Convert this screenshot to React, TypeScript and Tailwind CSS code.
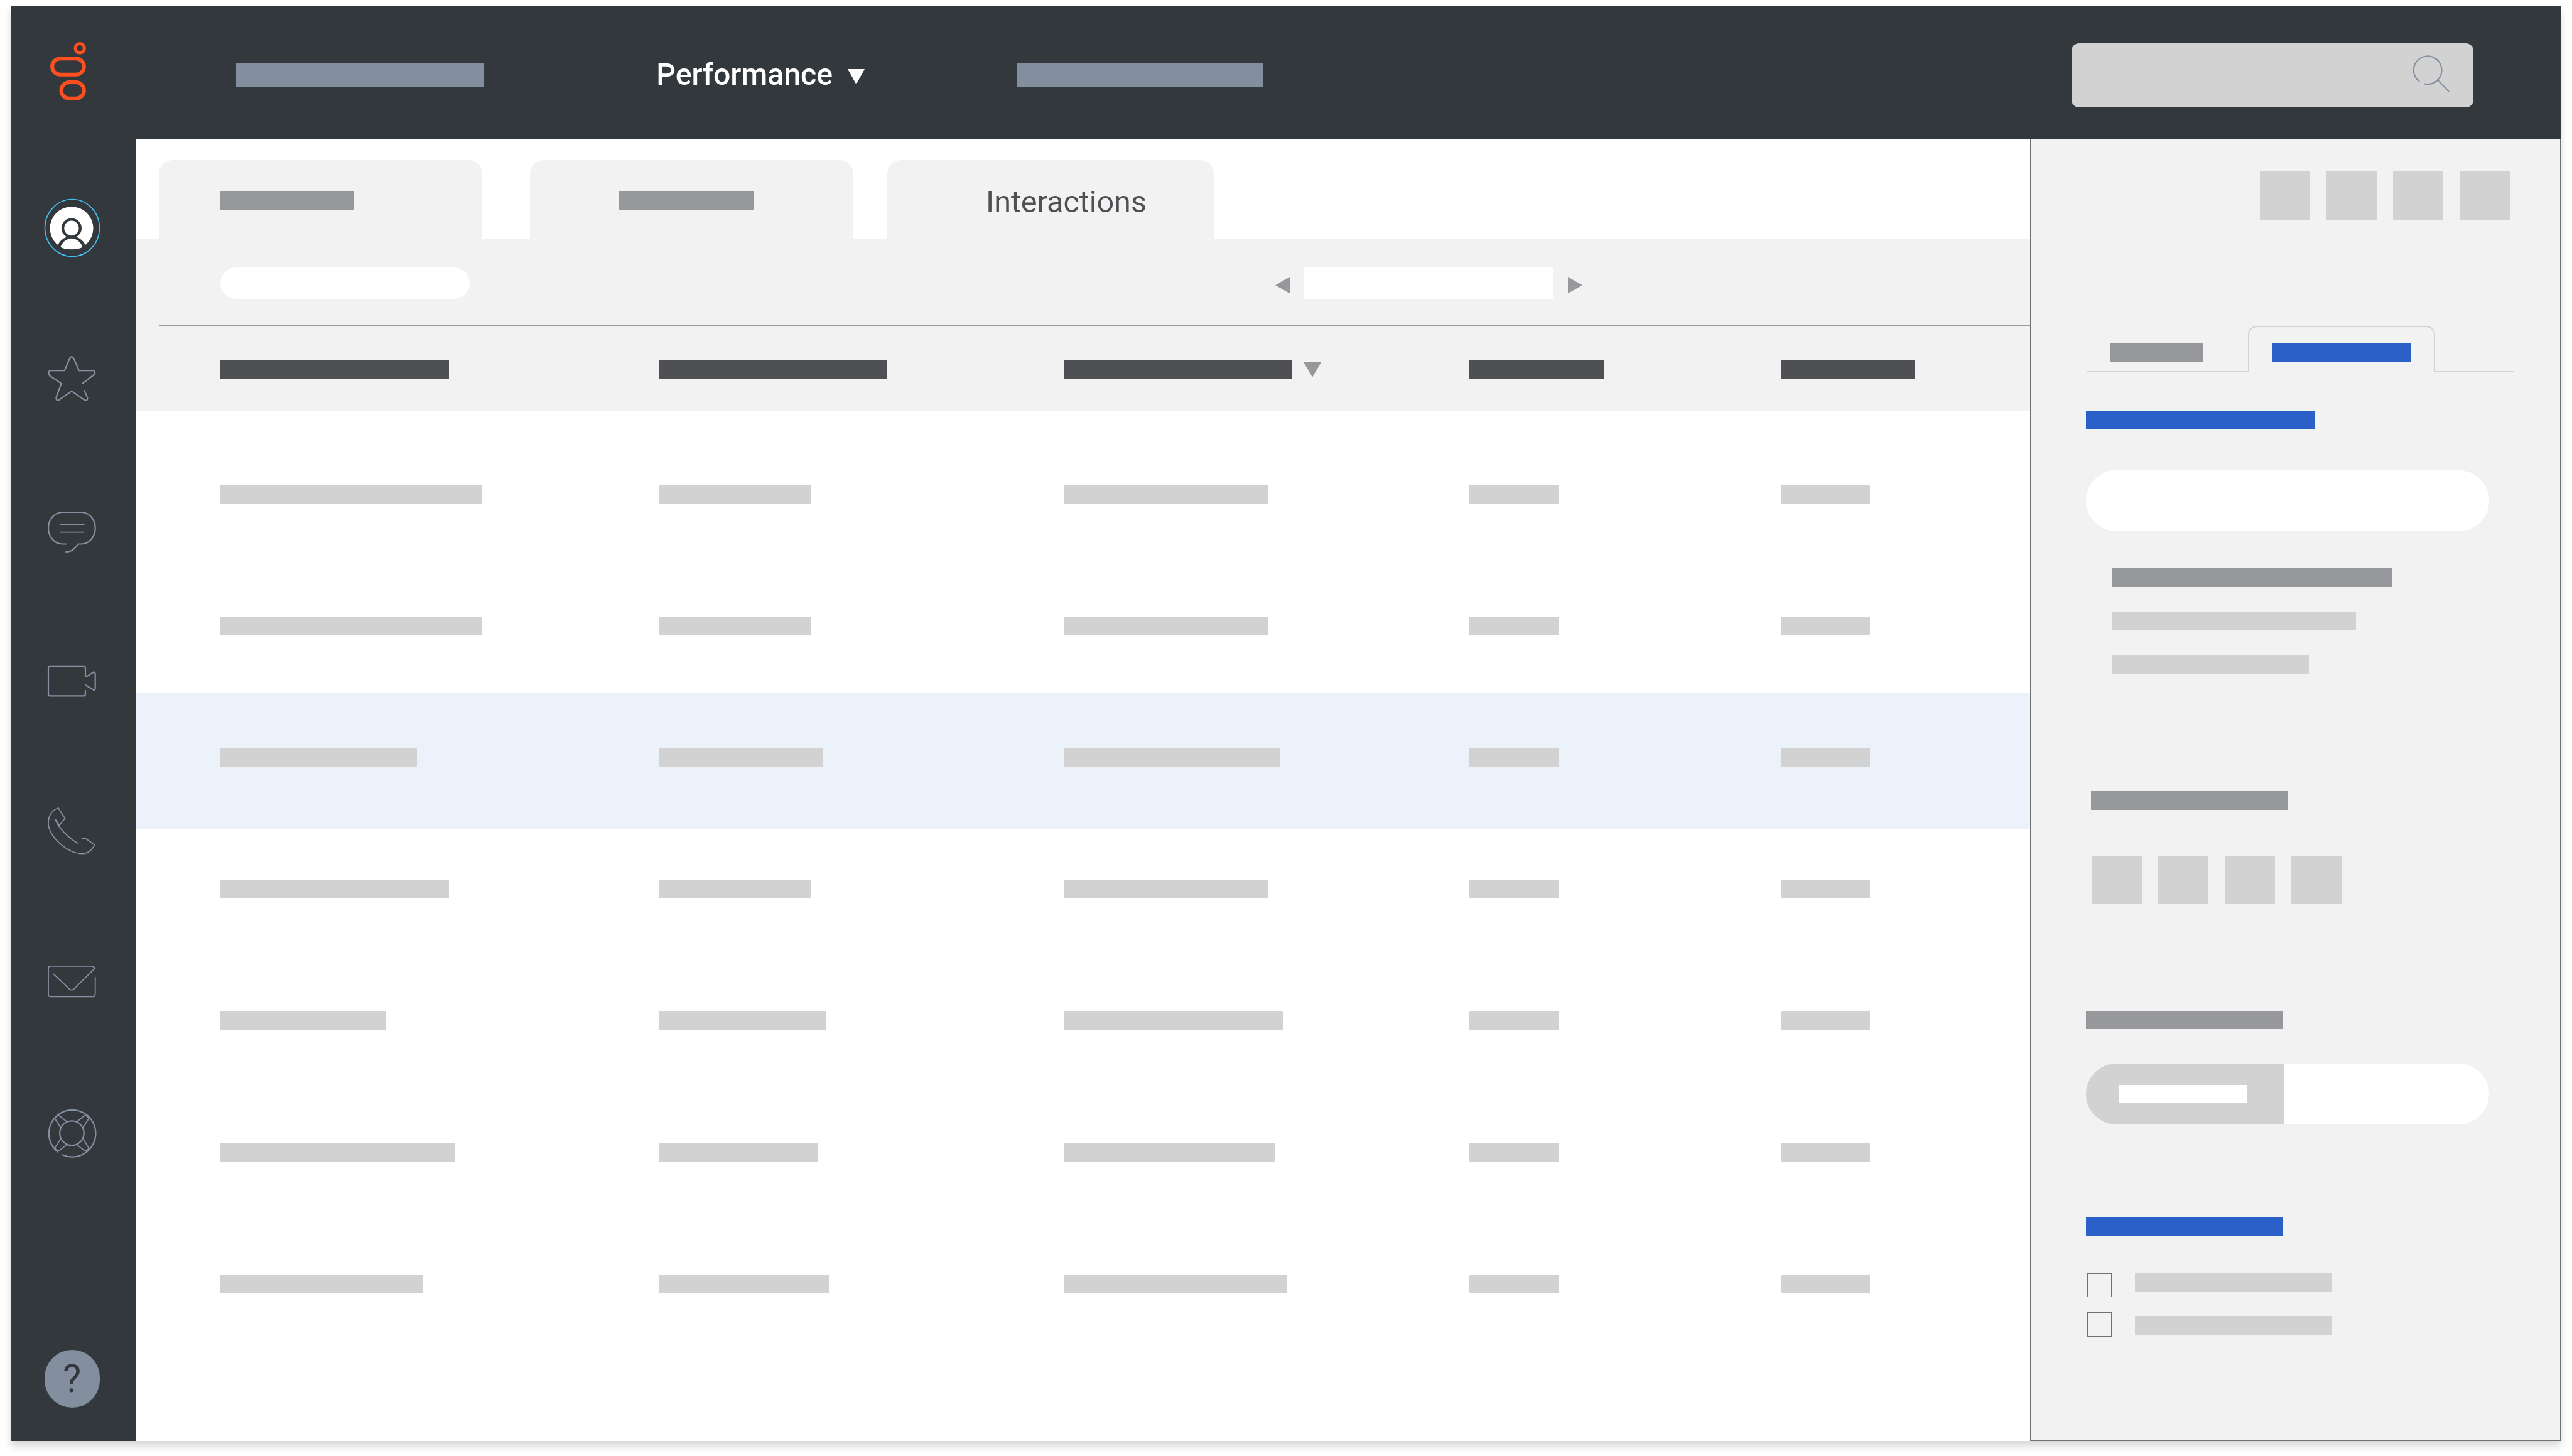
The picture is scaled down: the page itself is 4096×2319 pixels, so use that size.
const rows = [
  { band: 'h-[209.3px] pt-[87.2px]', cells: [416, 243, 325, 142.6, 142.6] },
  { band: 'h-[209.3px] pt-[87.2px]', cells: [416, 243, 325, 142.6, 142.6] },
  { band: 'h-[216.4px] pt-[87.4px] bg-[#ebf2fa]', cells: [313, 261, 344, 142.6, 142.6] },
  { band: 'h-[209.7px] pt-[80.5px]', cells: [364, 243, 325, 142.6, 142.6] },
  { band: 'h-[209.7px] pt-[80.5px]', cells: [264.5, 266, 349, 142.6, 142.6] },
  { band: 'h-[209.7px] pt-[80.5px]', cells: [373, 253, 336, 142.6, 142.6] },
  { band: 'h-[209.7px] pt-[80.5px]', cells: [323.5, 272, 355, 142.6, 142.6] },
];

const columns = 'grid grid-cols-[698px_645.4px_646px_495.5px_1fr] pl-[135px]';

function Logo() {
  return (
    <svg className="w-[57px] h-[93px] overflow-visible" viewBox="0 0 57 93" fill="none" stroke="#ff4f1f" strokeWidth="6">
      <ellipse cx="47.2" cy="9.8" rx="7.2" ry="7.3" strokeWidth="5" />
      <rect x="3.1" y="26.2" width="50.7" height="25.6" rx="12.8" />
      <rect x="17.5" y="64" width="36.3" height="25.8" rx="12.9" />
    </svg>
  );
}

function Avatar() {
  return (
    <svg className="w-[88px] h-[92px] overflow-visible" viewBox="0 0 88 92" fill="none">
      <ellipse cx="44" cy="46" rx="43.5" ry="45.5" stroke="#45c1f1" strokeWidth="1.6" />
      <ellipse cx="43" cy="46.6" rx="34.5" ry="34.4" fill="#fff" />
      <path d="M20 76C22 68 32 59 43 59C54 59 64 68 66 76L66 83L20 83Z" fill="#33383d" />
      <path d="M25.3 76.7C28 68 36 62.7 43 62.7C50 62.7 58 68 60.5 76.7C52 81.4 34 81.4 25.3 76.7Z" fill="#fff" />
      <ellipse cx="42.9" cy="46.4" rx="16.1" ry="15.8" fill="#33383d" />
      <ellipse cx="42.9" cy="46.4" rx="11.6" ry="11.8" fill="#fff" />
    </svg>
  );
}

function NavIcon({ className, box, children }: { className: string; box: string; children: React.ReactNode }) {
  return (
    <svg className={className} viewBox={box} fill="none" stroke="#8591a1" strokeWidth="2.2" strokeLinecap="round" strokeLinejoin="round">
      {children}
    </svg>
  );
}

function Triangle({ className, points, fill }: { className: string; points: string; fill: string }) {
  return (
    <svg className={className} viewBox="0 0 24 24" preserveAspectRatio="none">
      <polygon points={points} fill={fill} />
    </svg>
  );
}

function Squares({ className }: { className: string }) {
  return (
    <div className={className}>
      <div className="w-[79.6px] h-[76.4px] bg-[#d2d2d2]" />
      <div className="w-[79.6px] h-[76.4px] bg-[#d2d2d2]" />
      <div className="w-[79.6px] h-[76.4px] bg-[#d2d2d2]" />
      <div className="w-[79.6px] h-[76.4px] bg-[#d2d2d2]" />
    </div>
  );
}

export default function App() {
  return (
    <div className="w-[4096px] h-[2319px] bg-white pt-[9.6px] pl-[17.2px] overflow-hidden font-[Roboto,sans-serif]">
      <div className="w-[4060.8px] h-[2285px] flex flex-col bg-white shadow-[0_8px_12px_rgba(0,0,0,0.16)]">
        {/* Top bar */}
        <header className="h-[211.7px] shrink-0 flex items-start bg-[#33383d] pl-[62.4px] pr-[138.6px]">
          <div className="mt-[57px]">
            <Logo />
          </div>
          <div className="ml-[239.7px] w-[394.5px] h-[37px] mt-[91.4px] bg-[#838e9e]" />
          <span className="ml-[274.5px] mt-[85.7px] text-[48.2px] leading-[48px] font-medium text-white">Performance</span>
          <Triangle className="ml-[24px] mt-[100.9px] w-[27px] h-[24.3px]" points="0,0 24,0 12,24" fill="#fff" />
          <div className="ml-[241.7px] w-[392px] h-[37px] mt-[91.4px] bg-[#838e9e]" />
          <div className="ml-auto mt-[59.4px] w-[640px] h-[102px] rounded-[12px] bg-[#d2d2d2] flex justify-end pr-[39.5px] pt-[20.3px]">
            <svg className="w-[56px] h-[57px] overflow-visible" viewBox="0 0 56 57" fill="none" stroke="#8591a1" strokeWidth="2.2" strokeLinecap="round">
              <path d="M17.4 44.5A22.3 22.3 0 1 0 8.7 40.5" />
              <path d="M39.4 39.7L55.5 56.2" />
            </svg>
          </div>
        </header>

        <div className="flex-1 flex min-h-0">
          {/* Left nav */}
          <nav className="w-[198.8px] shrink-0 flex flex-col items-center bg-[#33383d] pt-[95.5px] pr-[4px] pb-[53px]">
            <Avatar />
            <NavIcon className="mt-[158px] w-[74.7px] h-[71.4px] overflow-visible" box="0 0 74.7 71.4">
              <path d="M54.1 43.8L73.2 29.5Q75.5 26 72.2 23.2H48.8L40.3 3.6Q37.2 -1.5 34 3.6L25.9 23.2H2.1Q-1 26.8 2.1 31.3L20.6 43.8L12.7 65.2Q11.5 71 15.9 70.6L37.2 55.9L58.4 70.6Q63.5 71 62.2 66.1L57.5 55.4" />
            </NavIcon>
            <NavIcon className="mt-[177.8px] w-[74.7px] h-[64.4px] overflow-visible" box="0 0 74.7 64.4">
              <path d="M28.2 50.5H22.3C10 50.5 0 39 0 25.3C0 11 10 0 22.3 0H52.4C65 0 74.7 11 74.7 25.3C74.7 39 65 50.5 52.4 50.5H48C45.5 51 42 63 28.2 63" />
              <path d="M18.7 19.2H56.7M18.7 31.7H56.7" strokeWidth="1.8" />
            </NavIcon>
            <NavIcon className="mt-[179.7px] w-[74.7px] h-[49px] overflow-visible" box="0 0 74.7 49">
              <path d="M59 40.2V44.7Q59 48.3 56.3 48.3H2.1Q0 48.3 0 44.7V4.5Q0 .9 2.1 .9H56.3Q59 .9 59 4.5V14.7Q59 17.9 60.5 17.9L72.2 10.3Q74.7 10.5 74.7 14.7V35.8Q74.7 39.5 72.2 38.9L59.5 31.3" />
            </NavIcon>
            <NavIcon className="mt-[178.3px] w-[74.7px] h-[72.6px] overflow-visible" box="0 0 74.7 72.6">
              <path d="M15.9 0L26.5 16.5L17.4 27.7L11.3 18C14 30 35 50 47.3 56.1" strokeWidth="1.8" />
              <path d="M53.7 48.6L58.4 47.9L73.9 58.4C68 70 60 72.6 54 72.6C30 72.6 0 45 0 24C0 12 6 3 15.9 0" strokeWidth="1.8" />
            </NavIcon>
            <NavIcon className="mt-[178px] w-[74.7px] h-[50px] overflow-visible" box="0 0 74.7 50">
              <path d="M74.7 18.7V43Q74.7 49.4 72 49.4H2.5Q0 49.4 0 43V6Q0 .8 2.5 .8H70L74.7 3.7L41.4 36.7C39 39.5 35.5 39.5 32.9 36.7L8.5 13.5" strokeWidth="1.8" />
            </NavIcon>
            <NavIcon className="mt-[179px] w-[74.7px] h-[75.6px] overflow-visible" box="0 0 74.7 75.6">
              <path d="M22.9 72.4A37.3 37.4 0 1 0 15 67.6" />
              <ellipse cx="37.4" cy="37.8" rx="19.3" ry="19.5" />
              <path d="M19.8 29.2L10.2 14.2Q13 10 17 9.7L29.3 19.5M55 29.2L64.6 14.2Q62 10 57.8 9.7L45.5 19.5M19.8 46.4L10.2 61.4Q13 65.6 17 65.9L29.3 56.1M55 46.4L64.6 61.4Q62 65.6 57.8 65.9L45.5 56.1" strokeWidth="1.8" />
            </NavIcon>
            <div className="mt-auto w-[88px] h-[92px] rounded-full bg-[#838e9e] flex items-center justify-center text-[62px] leading-none text-[#33383d]">
              ?
            </div>
          </nav>

          {/* Table area */}
          <main className="flex-1 min-w-0 flex flex-col">
            <div className="flex gap-[75.6px] pl-[37.4px] pt-[33.7px]">
              <div className="w-[515px] h-[126.4px] rounded-t-[22px] bg-[#f2f2f2] pl-[96.6px] pt-[49.1px]">
                <div className="w-[214px] h-[30px] bg-[#97989b]" />
              </div>
              <div className="w-[515px] h-[126.4px] rounded-t-[22px] bg-[#f2f2f2] pl-[142px] pt-[49.1px]">
                <div className="w-[214px] h-[30px] bg-[#97989b]" />
              </div>
              <div className="-ml-[21.6px] w-[520px] h-[126.4px] rounded-t-[22px] bg-[#f2f2f2] pl-[157px] pt-[43px] text-[48.5px] leading-[48px] text-[#4f5054]">
                Interactions
              </div>
            </div>

            <div className="bg-[#f2f2f2]">
              <div className="ml-[37.4px] h-[138px] border-b-2 border-[#98999c] flex items-start pt-[45px] pl-[97.6px]">
                <div className="w-[397px] h-[49.6px] rounded-full bg-white" />
                <Triangle className="ml-[1283px] mt-[14.6px] w-[23px] h-[26.4px]" points="24,0 24,24 0,12" fill="#97989b" />
                <div className="ml-[22px] w-[398px] h-[49.6px] bg-white" />
                <Triangle className="ml-[23px] mt-[14.6px] w-[23px] h-[26.4px]" points="0,0 24,12 0,24" fill="#97989b" />
              </div>
              <div className={`${columns} h-[135.7px] pt-[55px]`}>
                <div className="w-[364px] h-[29.7px] bg-[#4f5054]" />
                <div className="w-[364px] h-[29.7px] bg-[#4f5054]" />
                <div className="flex items-start">
                  <div className="w-[364px] h-[29.7px] bg-[#4f5054]" />
                  <Triangle className="ml-[17.6px] mt-[3px] w-[28px] h-[23.7px]" points="0,0 24,0 12,24" fill="#97989b" />
                </div>
                <div className="w-[213.8px] h-[29.7px] bg-[#4f5054]" />
                <div className="w-[213.8px] h-[29.7px] bg-[#4f5054]" />
              </div>
            </div>

            <div className="pt-[30.3px]">
              {rows.map((row, i) => (
                <div key={i} className={`${columns} ${row.band}`}>
                  {row.cells.map((width, j) => (
                    <div key={j} className="h-[29.7px] bg-[#d2d2d2]" style={{ width }} />
                  ))}
                </div>
              ))}
            </div>
          </main>

          {/* Right panel */}
          <aside className="w-[845px] shrink-0 bg-[#f2f2f2] border-x-[1.7px] border-y-[1.5px] border-[#717171] flex flex-col">
            <Squares className="mt-[51px] pr-[80px] flex justify-end gap-[26.6px]" />

            <div className="mt-[169.2px] ml-[89px] w-[681px] h-[74.6px] flex">
              <div className="w-[256.6px] border-b-2 border-[#d2d2d2] pl-[38.5px] pt-[27.6px]">
                <div className="w-[146.8px] h-[29.7px] bg-[#97989b]" />
              </div>
              <div className="w-[298.4px] border-2 border-b-0 border-[#d2d2d2] rounded-t-[14px] pl-[36.4px] pt-[25.6px]">
                <div className="w-[222px] h-[29.7px] bg-[#2a60c8]" />
              </div>
              <div className="flex-1 border-b-2 border-[#d2d2d2]" />
            </div>

            <div className="pl-[88.3px] flex flex-col items-start">
              <div className="mt-[61.3px] w-[364px] h-[29.7px] bg-[#2a60c8]" />
              <div className="mt-[64.2px] w-[642px] h-[97px] rounded-full bg-white" />
              <div className="mt-[59.8px] ml-[42px] w-[445.7px] h-[30px] bg-[#97989b]" />
              <div className="mt-[39px] ml-[42px] w-[387.8px] h-[30px] bg-[#d2d2d2]" />
              <div className="mt-[38.6px] ml-[42px] w-[313px] h-[30px] bg-[#d2d2d2]" />

              <div className="mt-[186.8px] ml-[7.7px] w-[313px] h-[29.7px] bg-[#97989b]" />
              <Squares className="mt-[74.6px] ml-[8.7px] flex gap-[26.5px]" />

              <div className="mt-[169.5px] w-[313.7px] h-[29.3px] bg-[#97989b]" />
              <div className="mt-[54.8px] w-[641.7px] h-[96.6px] flex">
                <div className="w-[315.7px] rounded-l-full bg-[#d2d2d2] pl-[51.9px] flex items-center">
                  <div className="w-[204.8px] h-[29.2px] bg-white" />
                </div>
                <div className="flex-1 rounded-r-full bg-white" />
              </div>

              <div className="mt-[147.8px] w-[313.7px] h-[30px] bg-[#2a60c8]" />
              <div className="mt-[59.3px] ml-[1.3px] flex items-start">
                <div className="w-[39.5px] h-[38.4px] border-[1.5px] border-[#717171]" />
                <div className="ml-[36.8px] w-[313.5px] h-[29.7px] bg-[#d2d2d2]" />
              </div>
              <div className="mt-[24px] ml-[1.3px] flex items-start">
                <div className="w-[39.5px] h-[38.4px] border-[1.5px] border-[#717171]" />
                <div className="ml-[36.8px] mt-[6px] w-[313.5px] h-[30px] bg-[#d2d2d2]" />
              </div>
            </div>
          </aside>
        </div>
      </div>
    </div>
  );
}
